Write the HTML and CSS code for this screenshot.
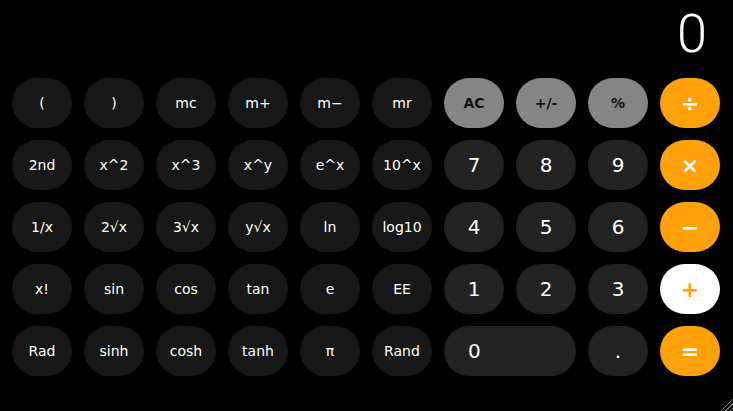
FILE: index.html
```html
<!DOCTYPE html>
<html lang="en">
<head>
<meta charset="utf-8">
<title>Calculator</title>
<link rel="stylesheet" href="styles.css">
</head>
<body>
<div class="calc">
  <div class="display">0</div>
  <div class="keys">
    <button class="key fn">(</button>
    <button class="key fn">)</button>
    <button class="key fn">mc</button>
    <button class="key fn">m+</button>
    <button class="key fn">m−</button>
    <button class="key fn">mr</button>
    <button class="key gray">AC</button>
    <button class="key gray">+/-</button>
    <button class="key gray">%</button>
    <button class="key op">÷</button>

    <button class="key fn">2nd</button>
    <button class="key fn">x^2</button>
    <button class="key fn">x^3</button>
    <button class="key fn">x^y</button>
    <button class="key fn">e^x</button>
    <button class="key fn">10^x</button>
    <button class="key num">7</button>
    <button class="key num">8</button>
    <button class="key num">9</button>
    <button class="key op">×</button>

    <button class="key fn">1/x</button>
    <button class="key fn">2√x</button>
    <button class="key fn">3√x</button>
    <button class="key fn">y√x</button>
    <button class="key fn">ln</button>
    <button class="key fn">log10</button>
    <button class="key num">4</button>
    <button class="key num">5</button>
    <button class="key num">6</button>
    <button class="key op">−</button>

    <button class="key fn">x!</button>
    <button class="key fn">sin</button>
    <button class="key fn">cos</button>
    <button class="key fn">tan</button>
    <button class="key fn">e</button>
    <button class="key fn">EE</button>
    <button class="key num">1</button>
    <button class="key num">2</button>
    <button class="key num">3</button>
    <button class="key op active">+</button>

    <button class="key fn">Rad</button>
    <button class="key fn">sinh</button>
    <button class="key fn">cosh</button>
    <button class="key fn">tanh</button>
    <button class="key fn">π</button>
    <button class="key fn">Rand</button>
    <button class="key num zero">0</button>
    <button class="key num">.</button>
    <button class="key op">=</button>
  </div>
</div>
<div class="grip"></div>
</body>
</html>
```

FILE: styles.css
```css
html, body {
  margin: 0;
  padding: 0;
  background: #000;
  height: 100%;
}
body {
  position: relative;
  overflow: hidden;
  font-family: "DejaVu Sans", Verdana, sans-serif;
  color: #fff;
}
.calc {
  display: flex;
  flex-direction: column;
  gap: 12px;
  padding: 0 13px 0 12px;
}
.display {
  height: 64px;
  padding-top: 2px;
  line-height: 64px;
  text-align: right;
  padding-right: 13px;
  font-family: Roboto, "Liberation Sans", sans-serif;
  font-weight: 300;
  font-size: 54px;
  color: #fff;
}
.keys {
  display: grid;
  grid-template-columns: repeat(10, 60px);
  grid-auto-rows: 50px;
  gap: 12px;
}
.key {
  border: 0;
  margin: 0;
  padding: 0;
  border-radius: 25px;
  font-family: "DejaVu Sans", Verdana, sans-serif;
  font-size: 14px;
  color: #fff;
  display: flex;
  align-items: center;
  justify-content: center;
  cursor: pointer;
}
.fn {
  background: #171717;
}
.num {
  background: #222222;
  font-size: 20px;
}
.gray {
  background: #858585;
  color: #111;
  font-weight: bold;
  font-size: 14px;
}
.op {
  background: #ffa20a;
  color: #fff;
  font-weight: bold;
  font-size: 22px;
}
.op.active {
  background: #fff;
  color: #ffa20a;
}
.zero {
  grid-column: span 2;
  justify-content: flex-start;
  padding-left: 24px;
}
.grip {
  position: absolute;
  right: 0;
  bottom: 0;
  width: 14px;
  height: 14px;
  background: repeating-linear-gradient(135deg, transparent 0 2px, #777 2px 3px);
  clip-path: polygon(100% 0, 100% 100%, 0 100%);
}
```
